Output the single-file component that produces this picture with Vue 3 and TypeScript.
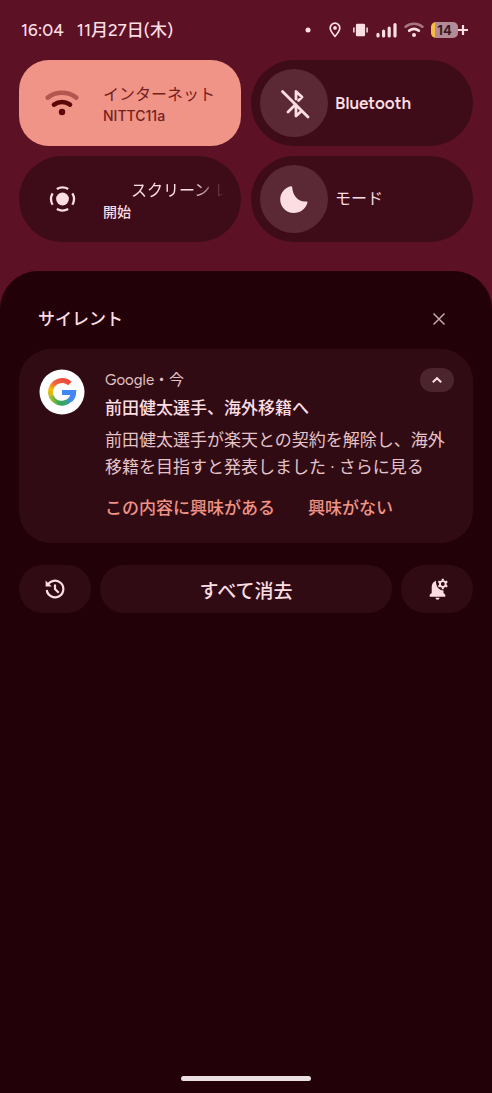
<script setup lang="ts">
import { ref } from 'vue'

interface Action {
  id: string
  label: string
}

const internetOn = ref(true)
const actions: Action[] = [
  { id: 'interested', label: 'この内容に興味がある' },
  { id: 'not-interested', label: '興味がない' },
]
</script>

<template>
  <div class="shade">
    <header class="status">
      <time class="clock">16:04</time>
      <span class="date">11月27日(木)</span>
      <div class="status-icons">
        <svg width="6" height="16" viewBox="0 0 6 16" aria-hidden="true"><circle cx="3" cy="8" r="2.500" fill="#fbdde2" /></svg>
        <svg class="pin" width="12" height="16" viewBox="0 0 12 16" aria-hidden="true">
          <path d="M6 1.200C3.300 1.200 1.200 3.300 1.200 5.900c0 3.200 3 6.100 4.800 8.500 1.800-2.400 4.800-5.300 4.800-8.500C10.800 3.300 8.700 1.200 6 1.200z" fill="none" stroke="#fbdde2" stroke-width="1.700" stroke-linejoin="round" />
          <circle cx="6" cy="5.900" r="1.900" fill="#fbdde2" />
        </svg>
        <svg class="vibrate" width="15" height="16" viewBox="0 0 15 16" aria-hidden="true">
          <rect x="2.900" y="1.700" width="9.200" height="12.600" rx="1.300" fill="#fbdde2" />
          <path d="M.9 5.500v5M14.100 5.500v5" stroke="#fbdde2" stroke-width="1.500" />
        </svg>
        <svg class="signal" width="22" height="16" viewBox="0 0 22 16" aria-hidden="true">
          <path d="M2 14v-1.600M7.600 14V9.200M13.200 14V6M19 14V2.500" stroke="#fbdde2" stroke-width="3.200" stroke-linecap="round" />
        </svg>
        <svg class="mini-wifi" width="20" height="16" viewBox="0 0 20 16" aria-hidden="true">
          <path d="M1.600 4.700C6.500.8 13.500.8 18.400 4.700" fill="none" stroke="#a8747f" stroke-width="2.600" stroke-linecap="round" />
          <path d="M5.200 8.700c2.900-2.200 6.700-2.200 9.600 0" fill="none" stroke="#fbdde2" stroke-width="2.700" stroke-linecap="round" />
          <circle cx="10" cy="13" r="2" fill="#fbdde2" />
        </svg>
        <div class="battery"><span>14</span></div>
        <svg class="plus" width="10" height="16" viewBox="0 0 10 16" aria-hidden="true"><path d="M5 3v10M0 8h10" stroke="#fbdde2" stroke-width="2.200" /></svg>
      </div>
    </header>

    <section class="tiles">
      <button class="tile active" type="button" :aria-pressed="internetOn" @click="internetOn = !internetOn">
        <span class="badge">
          <svg width="36" height="30" viewBox="0 0 36 30" aria-hidden="true">
            <path d="M3.700 9.600C12 3.100 24 3.100 32.300 9.600" fill="none" stroke="#b2564f" stroke-width="4.600" stroke-linecap="round" />
            <path d="M10 16.600c4.800-3.300 11.200-3.300 16 0" fill="none" stroke="#5c0608" stroke-width="4.600" stroke-linecap="round" />
            <circle cx="18" cy="24" r="3.200" fill="#5c0608" />
          </svg>
        </span>
        <span class="words double"><span class="name">インターネット</span><span class="state">NITTC11a</span></span>
      </button>
      <button class="tile" type="button">
        <span class="badge filled">
          <svg width="32" height="32" viewBox="0 0 32 32" fill="none" stroke="#fbdde2" stroke-width="2.800" stroke-linecap="round" stroke-linejoin="round" aria-hidden="true">
            <path d="M4.500 4.500 30 30" />
            <path d="M18 12V4.500l6 5.500-3.500 3.500M10 25l7.500-7.500M18 20v9l5-4.500" />
          </svg>
        </span>
        <span class="words"><span class="name latin">Bluetooth</span></span>
      </button>
      <button class="tile" type="button">
        <span class="badge">
          <svg width="30" height="30" viewBox="0 0 30 30" aria-hidden="true">
            <circle cx="15.500" cy="15" r="6.400" fill="#fbdde2" />
            <path d="M9.800 5.100a11.400 11.400 0 0 1 11.400 0M25.400 9.300a11.400 11.400 0 0 1 0 11.400M21.200 24.900a11.400 11.400 0 0 1-11.400 0M5.600 20.700a11.400 11.400 0 0 1 0-11.400" fill="none" stroke="#fbdde2" stroke-width="2.300" />
          </svg>
        </span>
        <span class="words double"><span class="name scrolling">スクリーン レコード</span><span class="state">開始</span></span>
      </button>
      <button class="tile" type="button">
        <span class="badge filled">
          <svg width="30" height="30" viewBox="0 0 30 30" aria-hidden="true">
            <path d="M11.500 2.300C5.400 4 1.200 9.200 1.200 15.500c0 7.500 6 13.500 13.500 13.500 6.400 0 12-4.200 13.700-10.300.3-.9-.2-1.400-1.200-1.300-7.500.8-13.400-5.500-13.900-13.700-.1-1-.8-1.700-1.800-1.400z" fill="#fbdde2" />
          </svg>
        </span>
        <span class="words"><span class="name">モード</span></span>
      </button>
    </section>

    <main class="panel">
      <div class="section-head">
        <h2>サイレント</h2>
        <button class="close" type="button" aria-label="閉じる">
          <svg width="14" height="14" viewBox="0 0 14 14" aria-hidden="true"><path d="m1.500 1.500 11 11M12.500 1.500l-11 11" stroke="#c8a5aa" stroke-width="1.500" /></svg>
        </button>
      </div>

      <article class="card">
        <svg class="logo" width="46" height="46" viewBox="0 0 46 46" aria-hidden="true">
          <defs>
            <linearGradient id="warm" gradientUnits="userSpaceOnUse" x1="24" y1="10" x2="12" y2="30">
              <stop offset="0" stop-color="#ee4b3f" /><stop offset=".35" stop-color="#f2653a" /><stop offset=".65" stop-color="#fbbc04" /><stop offset="1" stop-color="#a5bd30" />
            </linearGradient>
            <linearGradient id="cool" gradientUnits="userSpaceOnUse" x1="12" y1="30" x2="36" y2="26">
              <stop offset="0" stop-color="#a5bd30" /><stop offset=".3" stop-color="#34a853" /><stop offset=".6" stop-color="#38a17c" /><stop offset=".8" stop-color="#4285f4" />
            </linearGradient>
          </defs>
          <circle cx="23" cy="23" r="22.500" fill="#fff" />
          <path d="M31 14.500A11.700 11.700 0 0 0 12.500 28" fill="none" stroke="url(#warm)" stroke-width="5" />
          <path d="M12.300 27.500A11.700 11.700 0 0 0 34.500 23.500H23" fill="none" stroke="url(#cool)" stroke-width="5" />
          <path d="M23 23.500h11.600q-.1 4.500-3.300 7.500" fill="none" stroke="#4285f4" stroke-width="5" />
        </svg>
        <div class="content">
          <div class="meta">
            <span>Google・今</span>
            <button class="collapse" type="button" aria-label="折りたたむ">
              <svg width="12" height="8" viewBox="0 0 12 8" aria-hidden="true"><path d="m1.800 6.200 4.200-4 4.200 4" fill="none" stroke="#fbdde2" stroke-width="2" /></svg>
            </button>
          </div>
          <h3>前田健太選手、海外移籍へ</h3>
          <p>前田健太選手が楽天との契約を解除し、海外移籍を目指すと発表しました · さらに見る</p>
          <div class="actions">
            <button v-for="action in actions" :key="action.id" type="button">{{ action.label }}</button>
          </div>
        </div>
      </article>

      <div class="footer">
        <button class="pill" type="button" aria-label="履歴">
          <svg width="24" height="24" viewBox="0 0 24 24" fill="none" stroke="#fbdde2" stroke-width="2.200" aria-hidden="true">
            <path d="M4.500 8.500A8.300 8.300 0 1 1 3.800 13" /><path d="M12 7.500V12l3.700 3.700" /><path d="M2.600 3.400V9.600h6.200z" fill="#fbdde2" stroke="none" />
          </svg>
        </button>
        <button class="pill clear" type="button">すべて消去</button>
        <button class="pill" type="button" aria-label="通知の設定">
          <svg width="24" height="24" viewBox="0 0 24 24" aria-hidden="true">
            <path d="M11 3.700c-2.700.9-4.300 3.300-4.300 6.300v6L4.700 17.800v1.900h15.600v-1.900L18.500 16v-2.500c-4.500 0-7.900-4.500-7.500-9.800z" fill="#fbdde2" />
            <path d="M10.500 20.800h4c0 1.100-.9 2-2 2s-2-.9-2-2z" fill="#fbdde2" />
            <circle cx="17.800" cy="7" r="2.900" fill="none" stroke="#fbdde2" stroke-width="1.900" />
            <path d="M17.800 1.800v2M17.800 10.200v2M13.300 4.400l1.800 1M20.500 8.600l1.800 1M13.300 9.600l1.800-1M20.500 5.400l1.800-1" stroke="#fbdde2" stroke-width="2.100" />
          </svg>
        </button>
      </div>
      <div class="home-bar"></div>
    </main>
  </div>
</template>

<style>
body {
  margin: 0;
  background: #220208;
}
</style>

<style scoped>
.shade {
  min-height: 100vh;
  display: flex;
  flex-direction: column;
  background: #5c1125;
  color: #fbdde2;
  font-family: Figtree, "Noto Sans CJK JP", sans-serif;
}
button {
  border: 0;
  padding: 0;
  background: none;
  color: inherit;
  font: inherit;
  cursor: pointer;
}
svg {
  display: block;
  flex: none;
}
.status {
  display: flex;
  align-items: center;
  box-sizing: border-box;
  height: 60px;
  padding: 0 24px 0 21px;
  font-size: 17px;
  font-weight: 500;
  line-height: 24px;
}
.date {
  margin-left: 13px;
}
.status-icons {
  display: flex;
  align-items: center;
  margin-left: auto;
}
.pin {
  margin-left: 18px;
}
.vibrate {
  margin-left: 12px;
}
.signal {
  margin-left: 8px;
}
.mini-wifi {
  margin-left: 6px;
}
.battery {
  width: 27px;
  height: 16px;
  margin-left: 7px;
  border-radius: 5px;
  background: linear-gradient(90deg, #f7bd43 0 4px, #b48c97 4px);
  color: #3b1820;
  font-family: Inter, sans-serif;
  font-size: 13px;
  font-weight: 700;
  line-height: 16px;
  text-align: center;
}
.tiles {
  display: grid;
  grid-template-columns: 1fr 1fr;
  gap: 10px;
  padding: 0 19px 29px;
}
.tile {
  display: flex;
  align-items: center;
  min-width: 0;
  height: 86px;
  padding: 0 17px 0 9px;
  border-radius: 43px;
  background: #3e0c18;
  text-align: left;
}
.tile.active {
  border-radius: 30px;
  background: #f09488;
  color: #76201e;
}
.badge {
  display: flex;
  flex: none;
  align-items: center;
  justify-content: center;
  width: 68px;
  height: 68px;
  border-radius: 50%;
}
.badge.filled {
  background: #5b2935;
}
.words {
  display: flex;
  flex: 1;
  flex-direction: column;
  min-width: 0;
  padding-left: 7px;
  overflow: hidden;
}
.double {
  padding-top: 3px;
}
.name {
  font-size: 16px;
  line-height: 22px;
  white-space: nowrap;
}
.latin {
  font-size: 17px;
  font-weight: 600;
}
.state {
  font-family: Inter, "Noto Sans CJK JP", sans-serif;
  font-size: 14px;
  font-weight: 500;
  line-height: 20px;
}
.scrolling {
  padding-left: 28px;
  overflow: hidden;
  mask-image: linear-gradient(90deg, #000 75%, transparent);
}
.panel {
  display: flex;
  flex: 1;
  flex-direction: column;
  padding: 0 19px 12px;
  border-radius: 38px 38px 0 0;
  background: #220208;
}
.section-head {
  display: flex;
  align-items: center;
  justify-content: space-between;
  height: 78px;
  padding: 18px 20px 0 19px;
  box-sizing: border-box;
}
h2,
h3,
p {
  margin: 0;
}
h2 {
  font-size: 17px;
  font-weight: 500;
  line-height: 24px;
}
.close {
  display: grid;
  place-items: center;
  width: 28px;
  height: 28px;
}
.card {
  display: flex;
  gap: 20px;
  padding: 19px 19px 20px 20px;
  border-radius: 32px;
  background: #300b13;
}
.logo {
  margin-top: 1px;
}
.content {
  flex: 1;
  min-width: 0;
}
.meta {
  display: flex;
  align-items: center;
  justify-content: space-between;
  color: #e4c3c9;
  font-size: 15px;
  line-height: 24px;
}
.collapse {
  display: grid;
  place-items: center;
  width: 34px;
  height: 24px;
  border-radius: 12px;
  background: #4c242e;
}
h3 {
  margin-top: 4px;
  font-size: 17px;
  font-weight: 500;
  line-height: 24px;
}
p {
  margin-top: 7px;
  color: #e4c3c9;
  font-size: 17px;
  line-height: 27px;
}
.actions {
  display: flex;
  gap: 33px;
  margin-top: 14px;
  margin-bottom: 1px;
  color: #ee9385;
  font-size: 17px;
  font-weight: 500;
  line-height: 27px;
}
.footer {
  display: flex;
  gap: 9px;
  margin-top: 22px;
}
.pill {
  display: flex;
  align-items: center;
  justify-content: center;
  width: 72px;
  height: 48px;
  border-radius: 24px;
  background: #300b13;
}
.clear {
  flex: 1;
  font-size: 19px;
  font-weight: 500;
}
.home-bar {
  align-self: center;
  width: 130px;
  height: 5px;
  margin-top: auto;
  border-radius: 3px;
  background: #eadfe2;
}
</style>
